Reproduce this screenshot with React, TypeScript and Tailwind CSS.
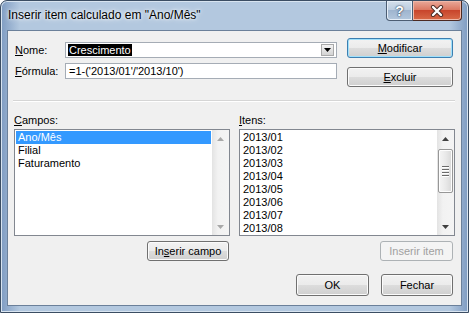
const btnBase =
  "flex items-center justify-center rounded-[3px] border text-[11px] leading-none";
const btnNormal =
  "text-black border-[#707070] bg-[linear-gradient(#f2f2f2_0%,#ebebeb_50%,#dddddd_50%,#cfcfcf_100%)] shadow-[inset_0_0_0_1px_#fbfbfb]";
const btnDefault =
  "text-black border-[#3c7fb1] bg-[linear-gradient(#f2f2f2_0%,#ebebeb_50%,#dddddd_50%,#cfcfcf_100%)] shadow-[inset_0_0_0_1px_#9fe0fb]";
const btnDisabled = "text-[#a0a0a0] border-[#adb2b5] bg-[#f4f4f4]";

function Arrow({ dir, color }: { dir: "up" | "down"; color: string }) {
  return (
    <svg width="7" height="4" viewBox="0 0 7 4">
      <polygon points={dir === "up" ? "3.5,0 7,4 0,4" : "0,0 7,0 3.5,4"} fill={color} />
    </svg>
  );
}

function ScrollBar({ enabled }: { enabled: boolean }) {
  const c = enabled ? "#404040" : "#a8a8a8";
  return (
    <div className="flex w-[17px] flex-col bg-[linear-gradient(to_right,#e3e3e3,#f2f2f2_35%,#f4f4f4)]">
      <div className="flex h-[17px] items-center justify-center">
        <Arrow dir="up" color={c} />
      </div>
      <div className="flex-1 px-[1px] pt-[2px]">
        {enabled && (
          <div className="flex h-[44px] flex-col items-center justify-center gap-[1px] rounded-[2px] border border-[#979797] bg-[linear-gradient(to_right,#f5f5f5,#e9e9e9_50%,#d8d8d8)] shadow-[inset_0_0_0_1px_#fdfdfd]">
            {[0, 1, 2, 3].map((i) => (
              <div key={i} className="box-content h-px w-[7px] border-b border-[#ffffff] bg-[#6a6a6a]" />
            ))}
          </div>
        )}
      </div>
      <div className="flex h-[17px] items-center justify-center">
        <Arrow dir="down" color={c} />
      </div>
    </div>
  );
}

function ListBox({ items, selected, scroll }: { items: string[]; selected?: number; scroll: boolean }) {
  return (
    <div className="flex h-[107px] w-[216px] border border-[#828790] bg-white">
      <div className="flex-1 overflow-hidden px-[1px] pt-[1px]">
        {items.map((it, i) => (
          <div
            key={it}
            className={`h-[13px] pl-[2px] text-[11px] leading-[13px] ${
              i === selected ? "bg-[#3399ff] text-white" : "text-black"
            }`}
          >
            {it}
          </div>
        ))}
      </div>
      <ScrollBar enabled={scroll} />
    </div>
  );
}

export default function App() {
  return (
    <div className="h-[313px] w-[469px] overflow-hidden bg-white font-['Liberation_Sans',Arial,sans-serif]">
      <div className="flex h-full w-full flex-col rounded-t-[7px] border border-[#3b4d63] bg-[linear-gradient(to_right,#7f9cc2,#b3c8df_4%,#b3c8df_96%,#7f9cc2)] shadow-[inset_0_0_0_1px_#d8e4f0]">
        {/* title bar */}
        <div className="flex h-[29px] items-start">
          <div className="pl-[7px] pt-[7px] text-[12px] leading-[15px] text-black [text-shadow:0_0_6px_#ffffff,0_0_3px_#ffffff]">
            Inserir item calculado em "Ano/Mês"
          </div>
          <div className="ml-auto mr-[6px] flex">
            <div className="flex h-[20px] w-[27px] items-center justify-center rounded-bl-[4px] border border-t-0 border-[#4c5d73] bg-[linear-gradient(#d4dfeb_0%,#bccde0_45%,#9fb5cf_50%,#b3c7dd_100%)] shadow-[inset_0_0_0_1px_#e6eef7]">
              <span className="text-[14px] font-bold leading-none text-white [text-shadow:0_0_1px_#2c3c52,0_0_2px_#2c3c52]">?</span>
            </div>
            <div className="flex h-[20px] w-[49px] items-center justify-center rounded-br-[4px] border border-l-0 border-t-0 border-[#4c2a22] bg-[linear-gradient(#e9a99a_0%,#dc7a64_45%,#c8452c_50%,#d86a48_100%)] shadow-[inset_0_0_0_1px_#f0b8a8]">
              <svg width="14" height="12" viewBox="0 0 14 12">
                <path d="M3 2 L11 10 M11 2 L3 10" stroke="#4a2a24" strokeWidth="4.2" strokeLinecap="round" />
                <path d="M3 2 L11 10 M11 2 L3 10" stroke="#ffffff" strokeWidth="2.4" strokeLinecap="round" />
              </svg>
            </div>
          </div>
        </div>

        {/* client area */}
        <div className="mx-[6px] mb-[6px] flex flex-1 flex-col border border-[#6b809a] bg-[#f0f0f0] text-[11px] text-black">
          {/* top section */}
          <div className="flex pl-[7px] pr-[8px] pt-[7px]">
            <div className="mt-[4px] flex w-[322px] flex-col gap-[5px]">
              <div className="flex h-[16px] items-center">
                <div className="w-[50px]">
                  <u className="underline-offset-1">N</u>ome:
                </div>
                <div className="flex h-[16px] w-[272px] items-center border border-[#a5acb5] bg-white pl-[2px]">
                  <span className="bg-black px-[1px] leading-[12px] text-white">Crescimento</span>
                  <div className="ml-auto mr-[2px] flex h-[12px] w-[13px] items-center justify-center border border-[#a9a9a9] bg-[linear-gradient(#f3f3f3,#e2e2e2_50%,#d3d3d3)]">
                    <Arrow dir="down" color="#000000" />
                  </div>
                </div>
              </div>
              <div className="flex h-[16px] items-center">
                <div className="w-[50px]">
                  <u className="underline-offset-1">F</u>órmula:
                </div>
                <div className="flex h-[16px] w-[272px] items-center border border-[#a5acb5] bg-white pl-[3px]">
                  =1-('2013/01'/'2013/10')
                </div>
              </div>
            </div>
            <div className="ml-[10px] flex w-[106px] flex-col gap-[9px]">
              <div className={`${btnBase} ${btnDefault} h-[20px]`}>
                <u className="underline-offset-1">M</u>odificar
              </div>
              <div className={`${btnBase} ${btnNormal} h-[20px]`}>
                <u className="underline-offset-1">E</u>xcluir
              </div>
            </div>
          </div>

          {/* separator */}
          <div className="ml-[5px] mr-[6px] mt-[13px] h-[2px] border-b border-t border-b-[#ffffff] border-t-[#d5d5d5]" />

          {/* list labels */}
          <div className="mt-[12px] flex h-[15px] gap-[9px] pl-[6px] leading-[13px]">
            <div className="w-[216px]">
              <u className="underline-offset-1">C</u>ampos:
            </div>
            <div className="w-[216px]">
              <u className="underline-offset-1">I</u>tens:
            </div>
          </div>

          {/* lists */}
          <div className="flex gap-[9px] pl-[6px]">
            <ListBox items={["Ano/Mês", "Filial", "Faturamento"]} selected={0} scroll={false} />
            <ListBox
              items={["2013/01", "2013/02", "2013/03", "2013/04", "2013/05", "2013/06", "2013/07", "2013/08"]}
              scroll
            />
          </div>

          {/* insert buttons */}
          <div className="mt-[5px] flex gap-[9px] pl-[6px]">
            <div className="flex w-[216px] justify-end pr-[1px]">
              <div className={`${btnBase} ${btnNormal} h-[20px] w-[82px]`}>
                In<u className="underline-offset-1">s</u>erir campo
              </div>
            </div>
            <div className="flex w-[216px] justify-end pr-[2px]">
              <div className={`${btnBase} ${btnDisabled} h-[20px] w-[73px]`}>Inserir item</div>
            </div>
          </div>

          {/* OK / Fechar */}
          <div className="mt-[13px] flex justify-end gap-[12px] pr-[8px]">
            <div className={`${btnBase} ${btnNormal} h-[22px] w-[73px]`}>OK</div>
            <div className={`${btnBase} ${btnNormal} h-[22px] w-[72px]`}>Fechar</div>
          </div>
        </div>
      </div>
    </div>
  );
}
